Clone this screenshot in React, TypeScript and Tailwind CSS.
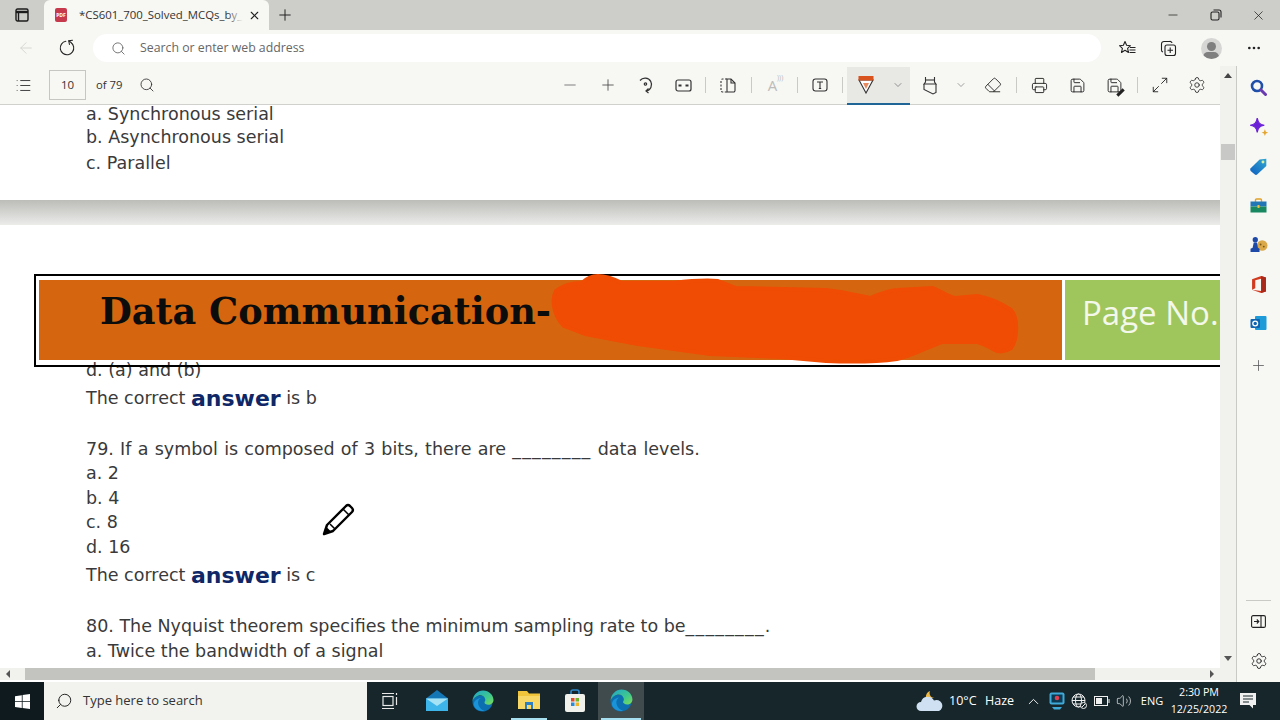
import type { ReactNode } from 'react'
import {
  ArrowLeft, RotateCw, Search, Minus, Plus, X, MoreHorizontal, List, ChevronDown, ChevronUp, Settings, Printer, Save,
  Maximize2, Eraser, Volume2,
} from 'lucide-react'

const ui = { fontFamily: '"Open Sans", "Noto Sans", sans-serif' }

function Slot({ w, children }: { w: string; children?: ReactNode }) {
  return <div className={`${w} h-full flex items-center justify-center shrink-0`}>{children}</div>
}

function Sep() {
  return <div className="w-px h-[16px] bg-[#c9c9c6]" />
}

function Line({ mt, children }: { mt: string; children: ReactNode }) {
  return <p className={`${mt} h-6 flex items-center whitespace-pre text-[17.500px] text-[#3a3a3a] pl-[86px]`}>{children}</p>
}

function Blank() {
  return <span className="tracking-[1.150px]">________</span>
}

function Answer({ letter }: { letter: string }) {
  return (
    <Line mt="mt-[4px]">
      The correct <b className="text-[22px] text-[#0f2766] font-bold">answer</b> is {letter}
    </Line>
  )
}

function EdgeLogo({ id, size }: { id: string; size: number }) {
  return (
    <svg width={size} height={size} viewBox="0 0 24 24">
      <defs>
        <linearGradient id={`${id}a`} x1="0" y1="0" x2="1" y2="1">
          <stop offset="0" stopColor="#1fa3cf" />
          <stop offset="0.6" stopColor="#3fc98c" />
          <stop offset="1" stopColor="#7fdc5a" />
        </linearGradient>
      </defs>
      <path d="M1.500 12C2 9 6 6 10 6.500c4 .4 6 3 4.500 6-.6 1.500 1.500 3 4 2.800 1.300-.1 2.300-.5 3-1.100C20.500 19.500 16 22.500 11.500 22.500 5.500 22.500 1.200 18 1.500 12z" fill="#0b6fb0" />
      <path d="M12 1.500c6 0 10.500 4.500 10.500 9.500 0 3-2.400 4.800-5 4.800-2.300 0-4.300-1.100-4-2.500.3-1 1-1.400.7-3C13.800 7.500 11 6 8.500 6.300 5.500 6.700 2.800 9 1.500 12 2 6 6.500 1.500 12 1.500z" fill={`url(#${id}a)`} />
      <path d="M10 9c-2.500 1-3.500 4-2.500 7 .8 2.500 3 5 6 5.800-5 1-9-1.500-10.500-5C2 13 5 9.500 10 9z" fill="#1b93d8" />
    </svg>
  )
}

function TabStrip() {
  return (
    <div className="h-[30px] bg-[#cdcec9] flex items-end shrink-0">
      <Slot w="w-[44px]">
        <svg width="14" height="14" viewBox="0 0 14 14" fill="none" stroke="#1c1c1c" strokeWidth="1.400">
          <rect x="1" y="1" width="12" height="12" rx="1.500" />
          <path d="M1 4h12" strokeWidth="2.400" />
          <path d="M3.500 4v9" />
        </svg>
      </Slot>
      <div className="w-[225px] h-[30px] bg-[#f7f7f4] rounded-t-[6px] flex items-center shrink-0">
        <div className="w-[12px] h-[14px] ml-[11px] bg-[#c73a4d] rounded-[2px] flex items-center justify-center text-white text-[5px] font-bold leading-none">PDF</div>
        <div className="w-[164px] ml-[12px] overflow-hidden whitespace-nowrap text-[11.400px] text-[#333] relative">
          *CS601_700_Solved_MCQs_by_is
          <div className="absolute right-0 top-0 h-full w-[16px] bg-gradient-to-r from-transparent to-[#f7f7f4]" />
        </div>
        <X size={13} strokeWidth={2} className="ml-[5px] text-[#222]" />
      </div>
      <Slot w="w-[32px]"><Plus size={18} strokeWidth={1.300} className="text-[#222]" /></Slot>
      <div className="flex-1" />
      <Slot w="w-[45px]"><Minus size={14} strokeWidth={1.300} className="text-[#222]" /></Slot>
      <Slot w="w-[42px]">
        <svg width="12" height="12" viewBox="0 0 12 12" fill="none" stroke="#222" strokeWidth="1.100">
          <rect x="1" y="3" width="8" height="8" rx="1.500" />
          <path d="M3.500 1h5.500a2 2 0 0 1 2 2v5.500" />
        </svg>
      </Slot>
      <Slot w="w-[43px]"><X size={15} strokeWidth={1.200} className="text-[#222]" /></Slot>
    </div>
  )
}

function AddressBar() {
  return (
    <div className="h-[36px] bg-[#f7f7f4] flex items-center shrink-0">
      <Slot w="w-[46px] ml-[3px]"><ArrowLeft size={18} strokeWidth={1.200} className="text-[#d2d2d0]" /></Slot>
      <Slot w="w-[36px]"><RotateCw size={18} strokeWidth={1.400} className="text-[#222] -scale-x-100 rotate-[80deg]" /></Slot>
      <div className="w-[1008px] ml-[8px] h-[28px] bg-white rounded-full flex items-center shrink-0">
        <Search size={15} strokeWidth={1.400} className="ml-[18px] text-[#666]" />
        <span className="ml-[14px] text-[12.300px] text-[#666]">Search or enter web address</span>
      </div>
      <Slot w="w-[52px]">
        <svg width="17" height="16" viewBox="0 0 17 16" fill="none" stroke="#222" strokeWidth="1.100" strokeLinejoin="round">
          <path d="M6 1.500 7.600 5.300 11.500 5.700 8.600 8.300 9.500 12.500 6 10.300 2.500 12.500 3.400 8.300.5 5.700 4.400 5.300z" />
          <path d="M11 7.500h5.500M10.500 10h6M10.500 12.500h6" />
        </svg>
      </Slot>
      <Slot w="w-[30px]">
        <svg width="17" height="17" viewBox="0 0 17 17" fill="none" stroke="#222" strokeWidth="1.100">
          <rect x="5" y="5" width="10.500" height="10.500" rx="2" />
          <path d="M10.200 7.500v5.500M7.500 10.200H13" />
          <path d="M3 12a2 2 0 0 1-1.500-2V4a2.500 2.500 0 0 1 2.500-2.500h5.500A2 2 0 0 1 12 3" />
        </svg>
      </Slot>
      <Slot w="w-[56px]">
        <div className="w-[21px] h-[21px] rounded-full bg-[#d6d6d4] overflow-hidden flex flex-col items-center">
          <div className="w-[9px] h-[9px] rounded-full bg-[#7f7f7f] mt-[4px] shrink-0" />
          <div className="w-[16px] h-[10px] rounded-full bg-[#7f7f7f] mt-[1px] shrink-0" />
        </div>
      </Slot>
      <Slot w="w-[30px]"><MoreHorizontal size={16} strokeWidth={2} className="text-[#222]" /></Slot>
    </div>
  )
}

function PdfToolbar() {
  const stroke = '#333'
  return (
    <div className="h-[39px] bg-[#f7f7f4] border-b border-[#d0d0cd] flex items-center shrink-0">
      <Slot w="w-[46px]"><List size={17} strokeWidth={1.300} className="text-[#333]" /></Slot>
      <div className="w-[37px] h-[30px] ml-[3px] border border-[#c6c6c3] flex items-center justify-center text-[11.500px] text-[#333] shrink-0">10</div>
      <span className="ml-[10px] w-[36px] text-[11.300px] text-[#333] shrink-0">of 79</span>
      <Slot w="w-[30px]"><Search size={16} strokeWidth={1.300} className="text-[#333]" /></Slot>
      <div className="w-[389px] shrink-0" />
      <Slot w="w-[38px]"><Minus size={18} strokeWidth={1.100} className="text-[#666]" /></Slot>
      <Slot w="w-[37px]"><Plus size={18} strokeWidth={1.100} className="text-[#444]" /></Slot>
      <Slot w="w-[38px]">
        <svg width="17" height="18" viewBox="0 0 17 18" fill="none" stroke={stroke} strokeWidth="1.200">
          <path d="M3 4.500A6.500 6.500 0 1 1 9 15" />
          <path d="M11.500 12.500 9 15l2.500 2" />
          <circle cx="8.500" cy="8" r="1.200" />
        </svg>
      </Slot>
      <Slot w="w-[38px]">
        <svg width="17" height="13" viewBox="0 0 17 13" fill="none" stroke={stroke} strokeWidth="1.200">
          <rect x="1" y="1" width="15" height="11" rx="2" />
          <path d="M3.500 6.500h3M10.500 6.500h3" strokeWidth="1.800" />
        </svg>
      </Slot>
      <Slot w="w-[6px]"><Sep /></Slot>
      <Slot w="w-[40px]">
        <svg width="16" height="15" viewBox="0 0 16 15" fill="none" stroke={stroke} strokeWidth="1.100">
          <path d="M7 1H2.500A1.500 1.500 0 0 0 1 2.500v10A1.500 1.500 0 0 0 2.500 14H7" strokeDasharray="2 1.500" />
          <path d="M7 1h4l4 4v7.500a1.500 1.500 0 0 1-1.500 1.500H7z" />
          <path d="M11 1v4h4" />
        </svg>
      </Slot>
      <Slot w="w-[6px]"><Sep /></Slot>
      <Slot w="w-[40px]">
        <span className="text-[15px] text-[#bcbcba] relative pr-[3px]">A<span className="absolute top-[-1px] right-[-3px] text-[7px]">)))</span></span>
      </Slot>
      <Slot w="w-[6px]"><Sep /></Slot>
      <Slot w="w-[40px]">
        <svg width="16" height="14" viewBox="0 0 16 14" fill="none" stroke={stroke} strokeWidth="1.100">
          <rect x="1" y="1" width="14" height="12" rx="2.500" />
          <path d="M5 4h6M8 4v6.500M6.800 10.500h2.400" />
        </svg>
      </Slot>
      <Slot w="w-[4px]"><Sep /></Slot>
      <div className="w-[63px] ml-[3px] h-[38px] mt-[1px] bg-[#e8e8e5] border-b-2 border-[#1f6595] flex items-center shrink-0">
        <Slot w="w-[38px]">
          <svg width="16" height="19" viewBox="0 0 16 19" fill="none">
            <path d="M1 5 8 18 15 5z" fill="#fff" stroke="#333" strokeWidth="1.100" />
            <path d="M.5 1h15v4.500H.5z" fill="#d9531e" />
            <path d="M5 8h6L8 14z" fill="#e88a5f" />
          </svg>
        </Slot>
        <Slot w="w-[25px]"><ChevronDown size={12} strokeWidth={1.200} className="text-[#555]" /></Slot>
      </div>
      <Slot w="w-[40px]">
        <svg width="14" height="19" viewBox="0 0 14 19" fill="none" stroke={stroke} strokeWidth="1.100">
          <path d="M2.500 1v5L1 8h12l-1.500-2V1" />
          <path d="M2.500 4h9" />
          <path d="M1 8v5.500l9 4.500 3-1.500V8" />
        </svg>
      </Slot>
      <Slot w="w-[22px]"><ChevronDown size={12} strokeWidth={1.200} className="text-[#666]" /></Slot>
      <Slot w="w-[42px]"><Eraser size={18} strokeWidth={1.200} className="text-[#222]" /></Slot>
      <Slot w="w-[4px]"><Sep /></Slot>
      <Slot w="w-[42px]"><Printer size={17} strokeWidth={1.300} className="text-[#222]" /></Slot>
      <Slot w="w-[34px]"><Save size={17} strokeWidth={1.300} className="text-[#222]" /></Slot>
      <Slot w="w-[40px]">
        <div className="relative">
          <Save size={17} strokeWidth={1.300} className="text-[#222]" />
          <div className="absolute right-[-2px] bottom-[0px] w-[9px] h-[3px] bg-[#222] -rotate-45" />
        </div>
      </Slot>
      <Slot w="w-[6px]"><Sep /></Slot>
      <Slot w="w-[40px]"><Maximize2 size={18} strokeWidth={1.200} className="text-[#222] -scale-x-100 rotate-90" /></Slot>
      <Slot w="w-[34px]"><Settings size={18} strokeWidth={1.200} className="text-[#333]" /></Slot>
    </div>
  )
}

function BannerOverlay() {
  return (
    <div className="absolute left-[34px] right-0 top-[169px] h-[93px] border-y-2 border-l-2 border-black flex items-start pt-[4px] pl-[3px] gap-[3px] z-10">
      <div className="w-[1023px] h-[80px] bg-[#d5660f] flex items-center pl-[61px] pb-[16px] shrink-0">
        <span className="text-[36.700px] font-bold text-[#0c0c0c] whitespace-nowrap" style={{ fontFamily: '"DejaVu Serif", serif' }}>Data Communication-</span>
      </div>
      <div className="flex-1 h-[80px] bg-[#9fc55d] overflow-hidden flex items-center pl-[17px] pb-[14px]">
        <span className="text-[33px] text-[#f4f8ea] whitespace-nowrap" style={ui}>Page No.</span>
      </div>
    </div>
  )
}

function Scribble() {
  return (
    <svg className="absolute left-[540px] top-[165px] z-20" width="490" height="100" viewBox="0 0 490 100">
      <path
        d="M58 6C68 6 76 10 82 13L134 13C150 11 165 10 178 11L196 18 286 20C305 22 320 26 330 28 340 24 350 20 357 20L393 18C402 22 408 26 415 28L437 26C450 28 462 34 471 40 478 48 478 68 471 78 465 82 458 82 455 80 448 76 442 73 437 72L402 72C385 78 372 86 357 89 335 92 310 92 286 91L241 87 170 84 98 74 45 64 24 56C14 46 11 30 16 21 24 15 34 13 42 13 46 9 52 6 58 6Z"
        fill="#f04c03"
        stroke="#f04c03"
        strokeWidth="4"
        strokeLinejoin="round"
      />
    </svg>
  )
}

function PencilCursor() {
  return (
    <svg className="absolute left-[322px] top-[398px] z-20" width="33" height="33" viewBox="0 0 33 33" fill="none">
      <path d="M2 31 5 22 24 3a3 3 0 0 1 4 0l2 2a3 3 0 0 1 0 4L11 28z" fill="#fff" stroke="#000" strokeWidth="2.400" strokeLinejoin="round" />
      <path d="M2 31 4.500 24 9 28.500z" fill="#000" />
      <path d="M21 6l6 6M8 21l5 5" stroke="#000" strokeWidth="1.500" />
    </svg>
  )
}

function Document() {
  return (
    <div className="flex-1 relative overflow-hidden bg-white" style={{ fontFamily: '"DejaVu Sans", sans-serif' }}>
      <div className="h-[95px] flex flex-col">
        <Line mt="-mt-[3px]">a. Synchronous serial</Line>
        <Line mt="-mt-[1px]">b. Asynchronous serial</Line>
        <Line mt="mt-[2px]">c. Parallel</Line>
      </div>
      <div className="h-[25px] bg-gradient-to-b from-[#bcbcb9] to-[#ececea]" />
      <div className="pt-[133px] flex flex-col">
        <Line mt="mt-0">d. (a) and (b)</Line>
        <Answer letter="b" />
        <Line mt="mt-[27px] [word-spacing:0.7px]">79. If a symbol is composed of 3 bits, there are <Blank /> data levels.</Line>
        <Line mt="mt-0">a. 2</Line>
        <Line mt="mt-[1px]">b. 4</Line>
        <Line mt="mt-0">c. 8</Line>
        <Line mt="mt-[1px]">d. 16</Line>
        <Answer letter="c" />
        <Line mt="mt-[27px]">80. The Nyquist theorem specifies the minimum sampling rate to be<Blank />.</Line>
        <Line mt="mt-[1px]">a. Twice the bandwidth of a signal</Line>
      </div>
      <BannerOverlay />
      <Scribble />
      <PencilCursor />
    </div>
  )
}

function HScrollbar() {
  return (
    <div className="h-[14px] bg-[#f1f1ee] flex items-center shrink-0 border-b-2 border-white">
      <div className="w-[25px] pl-[6px] shrink-0"><div className="w-0 border-y-[4px] border-y-transparent border-r-[4px] border-r-[#555]" /></div>
      <div className="w-[1070px] h-full bg-[#c3c3c0]" />
      <div className="flex-1" />
      <Slot w="w-[16px]"><div className="border-y-[4px] border-y-transparent border-l-[4px] border-l-[#555]" /></Slot>
    </div>
  )
}

function VScrollbar() {
  return (
    <div className="w-[16px] bg-[#f1f1ee] flex flex-col items-center shrink-0 pt-[7px] pb-[21px]">
      <div className="border-x-[4px] border-x-transparent border-b-[5px] border-b-[#444]" />
      <div className="w-[14px] h-[16px] mt-[66px] bg-[#c8c8c6]" />
      <div className="flex-1" />
      <div className="border-x-[4px] border-x-transparent border-t-[5px] border-t-[#555]" />
    </div>
  )
}

function SideIcon({ children }: { children: ReactNode }) {
  return <div className="h-[39.300px] flex items-center justify-center shrink-0">{children}</div>
}

function Sidebar() {
  return (
    <div className="w-[44px] bg-[#f7f7f4] border-l border-[#c9c9c6] flex flex-col shrink-0 pt-[2px]">
      <SideIcon>
        <svg width="17" height="17" viewBox="0 0 17 17" fill="none">
          <circle cx="7" cy="7" r="5" stroke="#1f4fa8" strokeWidth="2.600" />
          <path d="M10.800 10.800 15.500 15.500" stroke="#6a3ab0" strokeWidth="3" strokeLinecap="round" />
        </svg>
      </SideIcon>
      <SideIcon>
        <svg width="20" height="20" viewBox="0 0 17 17">
          <path d="M7 1C7.800 5 9 6.300 13 7 9 7.800 7.800 9 7 13 6.300 9 5 7.800 1 7 5 6.300 6.300 5 7 1z" fill="#6b22d6" stroke="#6b22d6" />
          <path d="M13.500 10.500l.8 2 2 .8-2 .8-.8 2-.8-2-2-.8 2-.8z" fill="#e3a52b" />
        </svg>
      </SideIcon>
      <SideIcon>
        <svg width="19" height="19" viewBox="0 0 17 17">
          <defs>
            <linearGradient id="tag" x1="0" y1="1" x2="1" y2="0">
              <stop offset="0" stopColor="#0f5fc0" />
              <stop offset="1" stopColor="#2fa8d0" />
            </linearGradient>
          </defs>
          <path d="M1.500 10 9.500 2.200 15.500 1.500 15.500 8 7.500 15.500a2 2 0 0 1-2.500 0L1.500 12.500a2 2 0 0 1 0-2.500z" fill="url(#tag)" />
          <circle cx="12.500" cy="4.500" r="1.300" fill="#d8f0a0" />
        </svg>
      </SideIcon>
      <SideIcon>
        <svg width="17" height="15" viewBox="0 0 17 15" fill="none">
          <path d="M5.500 4V2a1 1 0 0 1 1-1h4a1 1 0 0 1 1 1v2" stroke="#e0a32a" strokeWidth="1.400" />
          <rect x="0.500" y="3.500" width="16" height="5" fill="#2176b5" />
          <rect x="0.500" y="8.500" width="16" height="6" fill="#17885f" />
          <rect x="7.500" y="7" width="2" height="3" fill="#f0c040" />
        </svg>
      </SideIcon>
      <SideIcon>
        <svg width="18" height="17" viewBox="0 0 17 16">
          <circle cx="11.500" cy="9" r="5" fill="#d9a94a" />
          <circle cx="10" cy="8" r=".9" fill="#7a5a1a" />
          <circle cx="13" cy="10" r=".9" fill="#7a5a1a" />
          <circle cx="5" cy="3.500" r="2.500" fill="#1d49a8" />
          <path d="M3.500 6h3l1 5 1.500 1v3H.5v-3l2-1z" fill="#1d49a8" />
        </svg>
      </SideIcon>
      <SideIcon>
        <svg width="16" height="19" viewBox="0 0 15 17">
          <path d="M1 3.500 9.500.5 14 2v13l-4.500 1.500L1 13.500 9.500 14.500V3L4 4.500v7.500L1 13.500z" fill="#d13b1f" />
          <path d="M9.500.5 14 2v13l-4.500 1.500z" fill="#a92a1a" />
        </svg>
      </SideIcon>
      <SideIcon>
        <svg width="17" height="16" viewBox="0 0 17 16">
          <rect x="5" y="1" width="11.500" height="14" rx="1" fill="#1d9bd8" />
          <rect x="0.500" y="4" width="9.500" height="9" rx="1" fill="#0f64b0" />
          <circle cx="5.200" cy="8.500" r="2.400" fill="none" stroke="#fff" strokeWidth="1.300" />
        </svg>
      </SideIcon>
      <div className="h-[45px] flex items-center justify-center shrink-0"><Plus size={17} strokeWidth={1.100} className="text-[#555]" /></div>
      <div className="flex-1" />
      <div className="h-px w-[25px] ml-[9px] bg-[#c9c9c6]" />
      <div className="h-[41px] flex items-center justify-center shrink-0">
        <svg width="15" height="13" viewBox="0 0 15 13" fill="none" stroke="#222" strokeWidth="1.100">
          <rect x=".6" y=".6" width="13.800" height="11.800" rx="1.500" />
          <path d="M10 .6v11.800" />
          <path d="M3 6.500h4.500M5.800 4.500l2 2-2 2" />
        </svg>
      </div>
      <div className="h-[38px] flex items-center justify-center shrink-0"><Settings size={18} strokeWidth={1.200} className="text-[#222]" /></div>
      <div className="h-[2px]" />
    </div>
  )
}

function Taskbar() {
  return (
    <div className="h-[38px] bg-[#16262b] flex items-center text-white shrink-0">
      <div className="w-[44px] h-full bg-[#0e1a1d] flex items-center justify-center shrink-0">
        <svg width="15" height="15" viewBox="0 0 15 15" fill="#fff">
          <path d="M0 2.200 6.800 1.200v6H0zM7.600 1.100 15 0v7.200H7.600zM0 8h6.800v5.900L0 13zM7.600 8H15v7l-7.400-1z" />
        </svg>
      </div>
      <div className="w-[323px] h-full bg-[#f2f2ee] flex items-center shrink-0">
        <Search size={18} strokeWidth={1.300} className="ml-[11px] text-[#222] -scale-x-100" />
        <span className="ml-[10px] text-[13px] text-[#333]">Type here to search</span>
      </div>
      <Slot w="w-[46px]">
        <svg width="16" height="18" viewBox="0 0 16 18" fill="none" stroke="#e8e8e8" strokeWidth="1.200">
          <path d="M0 1.500h12M0 16.500h12" />
          <rect x="1" y="4.500" width="10" height="9" />
          <path d="M14.500 1v2M14.500 5v8" />
        </svg>
      </Slot>
      <Slot w="w-[47px]">
        <svg width="24" height="24" viewBox="0 0 24 24">
          <path d="M12 1 23 9.500V22H1V9.500z" fill="#1576b5" />
          <path d="M1 9.500h22V22H1z" fill="#3db4ea" />
          <path d="M1 9.500 12 17l11-7.500" fill="#a6e2f5" />
        </svg>
      </Slot>
      <Slot w="w-[46px]"><EdgeLogo id="e1" size={24} /></Slot>
      <div className="w-[46px] h-full flex flex-col items-center shrink-0">
        <div className="flex-1 flex items-center">
          <svg width="22" height="20" viewBox="0 0 22 20">
            <path d="M0 1h9l2 2.500h11V19H0z" fill="#f0c53c" />
            <path d="M0 6h22v13H0z" fill="#f7d766" />
            <path d="M7 12h8v7h-2v-4H9v4H7z" fill="#2d7fc0" />
          </svg>
        </div>
        <div className="w-[36px] h-[2px] bg-[#a6dff0]" />
      </div>
      <Slot w="w-[46px]">
        <svg width="22" height="24" viewBox="0 0 22 24" fill="none">
          <path d="M7 6V3a2 2 0 0 1 2-2h4a2 2 0 0 1 2 2v3" stroke="#2a86c8" strokeWidth="1.600" />
          <rect x="1" y="5" width="20" height="18" rx="2" fill="#f1f1ec" />
          <rect x="7" y="9" width="3.500" height="3.500" fill="#e0492a" />
          <rect x="11.500" y="9" width="3.500" height="3.500" fill="#6fb52c" />
          <rect x="7" y="13.500" width="3.500" height="3.500" fill="#2a8ad8" />
          <rect x="11.500" y="13.500" width="3.500" height="3.500" fill="#f0b429" />
        </svg>
      </Slot>
      <div className="w-[46px] h-full bg-[#3f4b4d] flex flex-col items-center shrink-0">
        <div className="flex-1 flex items-center"><EdgeLogo id="e2" size={25} /></div>
        <div className="w-[40px] h-[2px] bg-[#a6dff0]" />
      </div>
      <div className="w-[270px] shrink-0" />
      <Slot w="w-[32px]">
        <svg width="28" height="24" viewBox="0 0 28 24">
          <path d="M10 9a6 6 0 0 1 4-7 5 5 0 0 0 5 7z" fill="#f0b840" />
          <path d="M5 22a4.500 4.500 0 0 1 0-9 7 7 0 0 1 13-1.500A5.500 5.500 0 0 1 23 22z" fill="#cfe0f2" />
        </svg>
      </Slot>
      <span className="ml-[3px] w-[36px] text-[12.500px] shrink-0">10°C</span>
      <span className="w-[33px] text-[12.500px] shrink-0">Haze</span>
      <Slot w="w-[30px]"><ChevronUp size={17} strokeWidth={1.300} /></Slot>
      <Slot w="w-[18px]">
        <svg width="16" height="18" viewBox="0 0 16 18">
          <rect x="0.500" y="0.500" width="15" height="12" rx="2" fill="#3fa9d8" />
          <rect x="2.500" y="2.500" width="11" height="8" fill="#0c3a52" />
          <circle cx="8" cy="6" r="2.300" fill="#e04050" />
          <path d="M3 15h10l-2 2.500H5z" fill="#3fa9d8" />
        </svg>
      </Slot>
      <Slot w="w-[26px]">
        <svg width="16" height="16" viewBox="0 0 16 16" fill="none" stroke="#f0f0f0" strokeWidth="1">
          <circle cx="7.500" cy="7.500" r="6.500" />
          <ellipse cx="7.500" cy="7.500" rx="3" ry="6.500" />
          <path d="M1 7.500h13M2 4h11M2 11h11" />
          <circle cx="12.500" cy="12.500" r="3" fill="#16262b" />
          <path d="M11 14l3-3" />
        </svg>
      </Slot>
      <Slot w="w-[20px]">
        <svg width="16" height="10" viewBox="0 0 16 10" fill="none" stroke="#f0f0f0" strokeWidth="1">
          <rect x=".5" y=".5" width="13" height="9" />
          <rect x="2" y="2" width="6" height="6" fill="#f0f0f0" stroke="none" />
          <path d="M15 3v4" />
        </svg>
      </Slot>
      <Slot w="w-[24px]"><Volume2 size={16} strokeWidth={1} /></Slot>
      <span className="w-[32px] text-[11px] text-center shrink-0">ENG</span>
      <div className="w-[62px] flex flex-col items-center text-[10.700px] leading-[17px] shrink-0">
        <span>2:30 PM</span>
        <span>12/25/2022</span>
      </div>
      <Slot w="w-[36px]">
        <svg width="16" height="16" viewBox="0 0 16 16">
          <path d="M0 0h16v12h-3v3.500L9.500 12H0z" fill="#f0f0f0" />
          <path d="M3 3h10M3 6h10M3 9h6" stroke="#16262b" strokeWidth="1" />
        </svg>
      </Slot>
    </div>
  )
}

export default function App() {
  return (
    <div className="w-[1280px] h-[720px] flex flex-col overflow-hidden bg-white" style={ui}>
      <TabStrip />
      <AddressBar />
      <div className="flex-1 flex min-h-0">
        <div className="flex-1 flex flex-col min-w-0">
          <PdfToolbar />
          <Document />
          <HScrollbar />
        </div>
        <VScrollbar />
        <Sidebar />
      </div>
      <Taskbar />
    </div>
  )
}
